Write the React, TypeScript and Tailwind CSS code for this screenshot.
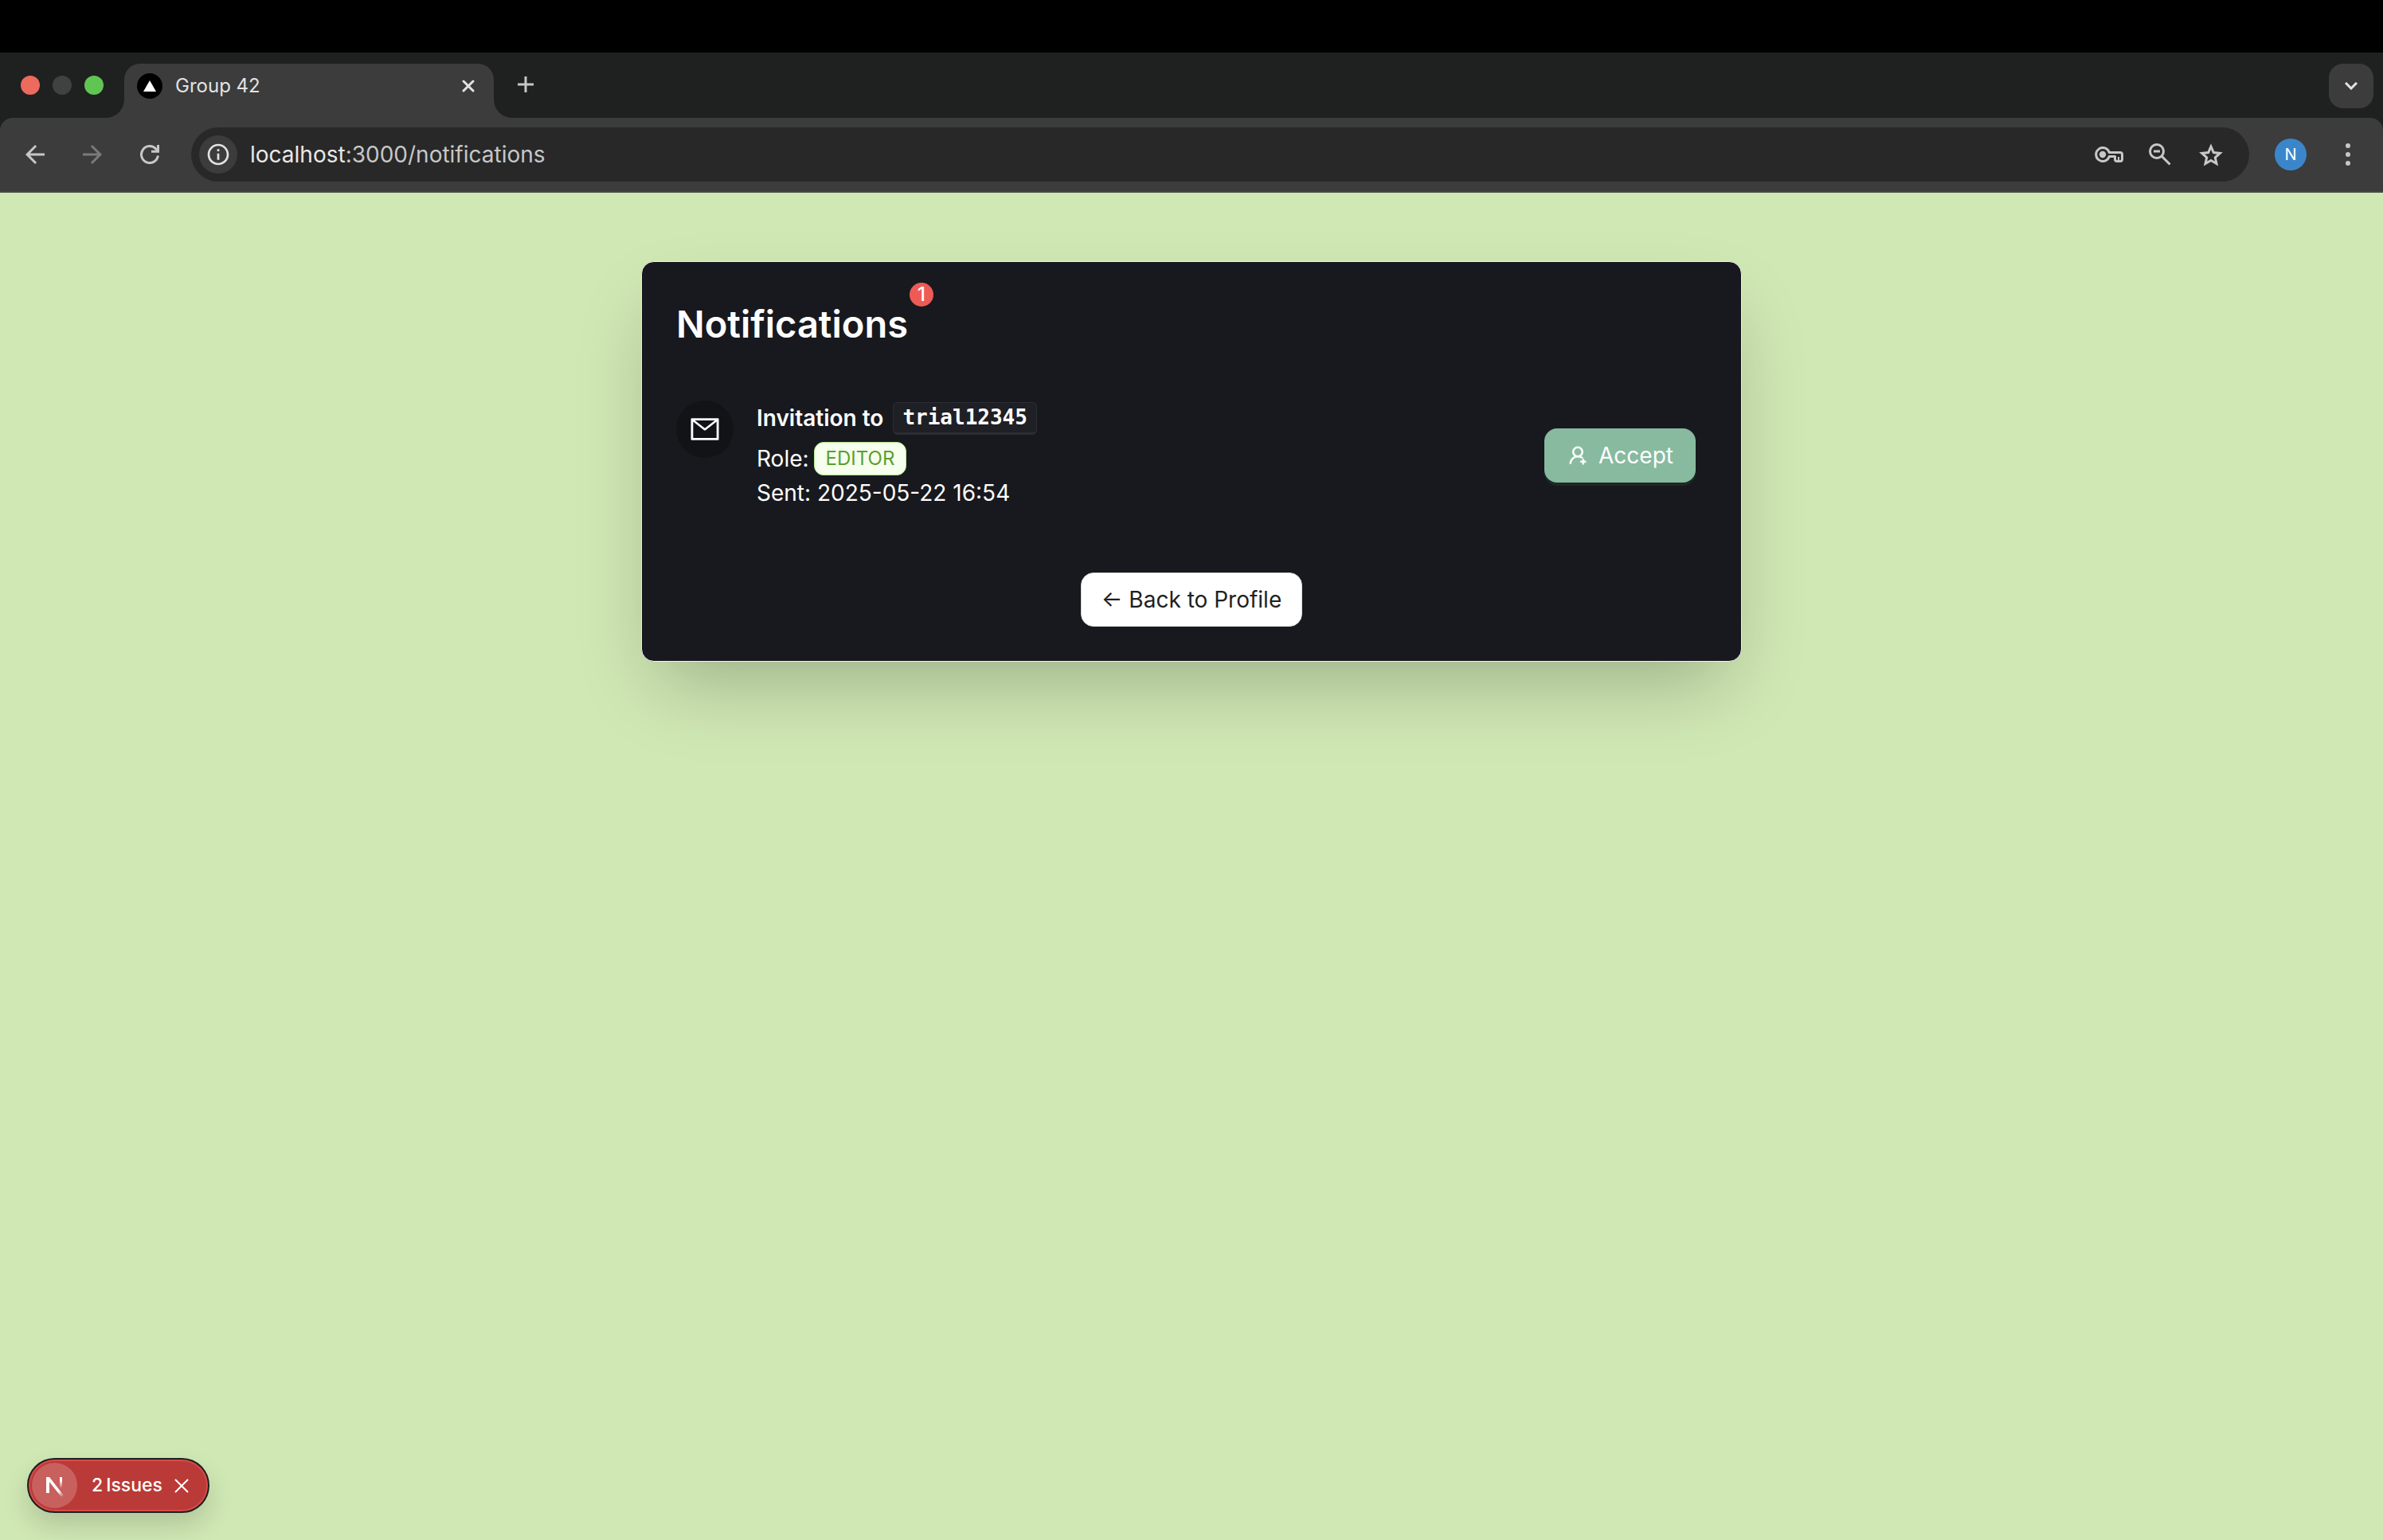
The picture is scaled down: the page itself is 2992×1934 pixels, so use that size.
import React from "react";
import { AiOutlineMail, AiOutlineUserAdd } from "react-icons/ai";
import { MdArrowBack, MdArrowForward, MdOutlineInfo } from "react-icons/md";

function TabCurve({ flip }: { flip?: boolean }) {
  return (
    <svg viewBox="0 0 24 24" className={flip ? "size-6 -scale-x-100" : "size-6"} aria-hidden="true">
      <path d="M24 0v24H0C14 24 24 14 24 0z" fill="#3c3c3c" />
    </svg>
  );
}

function KeyIcon() {
  return (
    <svg viewBox="0 0 36 20" className="h-5 w-9" fill="none" stroke="currentColor" strokeWidth="3" aria-hidden="true">
      <path
        d="M18.3 7.5H32a2.5 2.5 0 0 1 2.5 2.5v6a2.5 2.5 0 0 1-2.5 2.5h-4a2.5 2.5 0 0 1-2.5-2.5v-3.5h-7.2A8.5 8.5 0 1 1 18.3 7.5z"
        strokeLinejoin="round"
      />
      <circle cx="10" cy="10" r="4.2" fill="currentColor" stroke="none" />
      <path d="M30 13v4" strokeWidth="2" />
    </svg>
  );
}

function ZoomOutIcon() {
  return (
    <svg viewBox="0 0 28 28" className="size-7" fill="none" stroke="currentColor" strokeWidth="3" aria-hidden="true">
      <circle cx="10" cy="10" r="8.5" />
      <path d="M16 16l10.5 10.5M6 10h8" />
    </svg>
  );
}

function StarIcon() {
  return (
    <svg viewBox="0 0 30 29" className="h-[29px] w-[30px]" fill="none" stroke="currentColor" strokeWidth="3" strokeMiterlimit="10" aria-hidden="true">
      <path d="M15 4l3.3 7.6 8 .8-6 5.4 1.7 7.8-7-4.100-7 4.100 1.700-7.800-6-5.400 8-.8z" />
    </svg>
  );
}

function ReloadIcon() {
  return (
    <svg viewBox="0 0 24 24" className="size-6" fill="none" stroke="currentColor" strokeWidth="3" aria-hidden="true">
      <path d="M22.4 13.5A10.5 10.5 0 1 1 19.8 5l2.5 3" />
      <path d="M22.5 0v8.3H14" />
    </svg>
  );
}

function TabStrip() {
  return (
    <div className="flex h-[82px] items-end bg-[#1f2120] pr-3">
      <div className="flex h-full w-[132px] items-center gap-4 pl-[26px]">
        <button aria-label="Close window" className="size-6 rounded-full bg-[#ec6a5e]" />
        <button aria-label="Minimise window" className="size-6 rounded-full bg-[#404241]" />
        <button aria-label="Zoom window" className="size-6 rounded-full bg-[#61c554]" />
      </div>
      <TabCurve />
      <div className="flex h-[68px] w-[464px] items-center rounded-t-[20px] bg-[#3c3c3c] pb-3 pl-4 pr-6">
        <span className="flex size-8 items-center justify-center rounded-full bg-black">
          <svg viewBox="0 0 16 14" className="h-3.5 w-4" aria-hidden="true">
            <path d="M8 0l8 14H0z" fill="#fff" />
          </svg>
        </span>
        <span className="ml-4 flex-1 text-2xl text-[#e3e3e3]">Group 42</span>
        <button aria-label="Close tab" className="text-[#e3e3e3]">
          <svg viewBox="0 0 16 16" className="size-4" stroke="currentColor" strokeWidth="3" strokeLinecap="round" aria-hidden="true">
            <path d="M2 2l12 12M14 2L2 14" />
          </svg>
        </button>
      </div>
      <TabCurve flip />
      <button aria-label="New tab" className="mb-8 ml-1.5 text-[#c7c7c7]">
        <svg viewBox="0 0 20 20" className="size-5" stroke="currentColor" strokeWidth="3" aria-hidden="true">
          <path d="M10 0v20M0 10h20" />
        </svg>
      </button>
      <button
        aria-label="Search tabs"
        className="mb-3 ml-auto flex size-14 items-center justify-center rounded-[18px] bg-[#3c3c3c]"
      >
        <svg viewBox="0 0 16 10" className="h-2.5 w-4" fill="none" stroke="#e3e3e3" strokeWidth="3" aria-hidden="true">
          <path d="M1 1l7 7 7-7" />
        </svg>
      </button>
    </div>
  );
}

function Toolbar() {
  return (
    <div className="bg-[#1f2120]">
      <div className="flex h-[94px] items-center rounded-t-[16px] border-b-2 border-[#474747] bg-[#3c3c3c] px-6">
        <div className="flex items-center gap-8 text-[#c7c7c7]">
          <button aria-label="Back" className="flex size-10 items-center justify-center">
            <MdArrowBack className="size-9" />
          </button>
          <button aria-label="Forward" className="flex size-10 items-center justify-center text-[#7a7a7a]">
            <MdArrowForward className="size-9" />
          </button>
          <button aria-label="Reload" className="flex size-10 items-center justify-center">
            <ReloadIcon />
          </button>
        </div>
        <div className="ml-8 flex h-[68px] flex-1 items-center rounded-full bg-[#282828] pl-[10px] pr-7">
          <button
            aria-label="Site information"
            className="flex size-12 items-center justify-center rounded-full bg-[#3c3c3c] text-[#e3e3e3]"
          >
            <MdOutlineInfo className="size-8" />
          </button>
          <a href="#address" className="ml-4 flex-1 text-[28px] text-[#c7c7c7]">
            <span className="text-[#e8e8e8]">localhost</span>:3000/notifications
          </a>
          <div className="flex items-center gap-6 text-[#c7c7c7]">
            <button aria-label="Passwords" className="flex size-10 items-center justify-center">
              <KeyIcon />
            </button>
            <button aria-label="Zoom level" className="flex size-10 items-center justify-center">
              <ZoomOutIcon />
            </button>
            <button aria-label="Bookmark this tab" className="flex size-10 items-center justify-center">
              <StarIcon />
            </button>
          </div>
        </div>
        <button
          aria-label="Profile"
          className="ml-8 flex size-10 items-center justify-center rounded-full bg-[#3b86cb] text-xl text-white"
        >
          N
        </button>
        <button aria-label="Menu" className="ml-8 flex size-10 items-center justify-center text-[#c7c7c7]">
          <svg viewBox="0 0 6 28" className="h-7 w-1.5" fill="currentColor" aria-hidden="true">
            <circle cx="3" cy="3" r="3" />
            <circle cx="3" cy="14" r="3" />
            <circle cx="3" cy="25" r="3" />
          </svg>
        </button>
      </div>
    </div>
  );
}

function NotificationsCard() {
  return (
    <section className="mx-auto mt-[86px] flex w-full max-w-[1382px] flex-col rounded-2xl border border-[#f0f0f0] bg-[#18191e] px-[43px] pb-[43px] pt-12 text-white shadow-[0_45px_90px_-22px_rgba(0,0,0,0.25)]">
      <div className="relative self-start">
        <h1 className="text-[47px] font-semibold leading-[60px]">Notifications</h1>
        <span className="absolute -right-8 -top-[22px] flex size-[30px] items-center justify-center rounded-full bg-[#ee5b56] text-2xl font-medium leading-none">
          1
        </span>
      </div>
      <div className="mt-[66px] flex items-center pr-[14px]">
        <div className="flex size-[72px] shrink-0 items-center justify-center self-start rounded-full bg-[#121317]">
          <AiOutlineMail className="size-10" />
        </div>
        <div className="ml-[29px] flex-1 text-[28px]">
          <h2 className="flex items-center font-semibold leading-[44px]">
            Invitation to
            <code className="ml-3 rounded-md border border-b-[3px] border-[#2c2d32] bg-[#1f2025] px-[11px] font-['DejaVu_Sans_Mono'] text-[26px] leading-[37px]">
              trial12345
            </code>
          </h2>
          <p className="mt-2 flex items-center leading-[42px]">
            Role:
            <span className="ml-1.5 rounded-xl border border-[#b7eb8f] bg-[#f6ffed] px-3.5 text-2xl leading-[40px] text-[#5a9f2e]">
              EDITOR
            </span>
          </p>
          <p className="leading-[44px]">Sent: 2025-05-22 16:54</p>
        </div>
        <button className="flex h-[68px] items-center gap-3 rounded-2xl bg-[#87ba9f] px-7 text-[28px] shadow-[0_4px_0_#1d2926]">
          <AiOutlineUserAdd className="size-7" strokeWidth={16} />
          Accept
        </button>
      </div>
      <button className="mt-[78px] flex h-[68px] items-center self-center rounded-2xl border border-[#d9d9d9] bg-white px-[25px] text-[28px] text-[#1f1f1f]">
        ← Back to Profile
      </button>
    </section>
  );
}

function IssuesToast() {
  return (
    <div className="absolute bottom-[34px] left-[34px] flex h-[69px] w-[229px] items-center rounded-full border-2 border-[#1f1f1f] bg-[#ba3a37] pl-1 pr-6 text-[23px] font-medium text-white shadow-[inset_0_0_0_2px_#d64b4b,0_16px_32px_rgba(0,0,0,0.15)]">
      <button aria-label="Open developer tools" className="flex size-[57px] items-center justify-center rounded-full bg-[#c8605e]">
        <svg viewBox="0 0 24 28" className="h-7 w-6" fill="none" aria-hidden="true">
          <defs>
            <linearGradient id="stem" x1="0" y1="0" x2="0" y2="1">
              <stop offset="0.3" stopColor="#fff" />
              <stop offset="1" stopColor="#fff" stopOpacity="0" />
            </linearGradient>
            <linearGradient id="slash" gradientUnits="userSpaceOnUse" x1="14" y1="17" x2="22" y2="28">
              <stop offset="0.3" stopColor="#fff" />
              <stop offset="1" stopColor="#fff" stopOpacity="0" />
            </linearGradient>
          </defs>
          <rect x="18" y="3" width="3" height="14" fill="url(#stem)" />
          <path d="M1 3h4l18 23-3 2L5 9v14H1z" fill="url(#slash)" />
        </svg>
      </button>
      <button className="ml-[18px] flex gap-1">
        <span>2</span>
        <span>Issues</span>
      </button>
      <button aria-label="Dismiss issues" className="ml-auto">
        <svg viewBox="0 0 18 18" className="size-[18px]" stroke="#fff" strokeWidth="2" aria-hidden="true">
          <path d="M1 1l16 16M17 1L1 17" />
        </svg>
      </button>
    </div>
  );
}

export default function App() {
  return (
    <div className="relative flex min-h-screen flex-col bg-[#d0e8b4] font-['Inter',sans-serif]">
      <div className="h-[66px] bg-black" />
      <TabStrip />
      <Toolbar />
      <main className="px-10">
        <NotificationsCard />
      </main>
      <IssuesToast />
    </div>
  );
}
